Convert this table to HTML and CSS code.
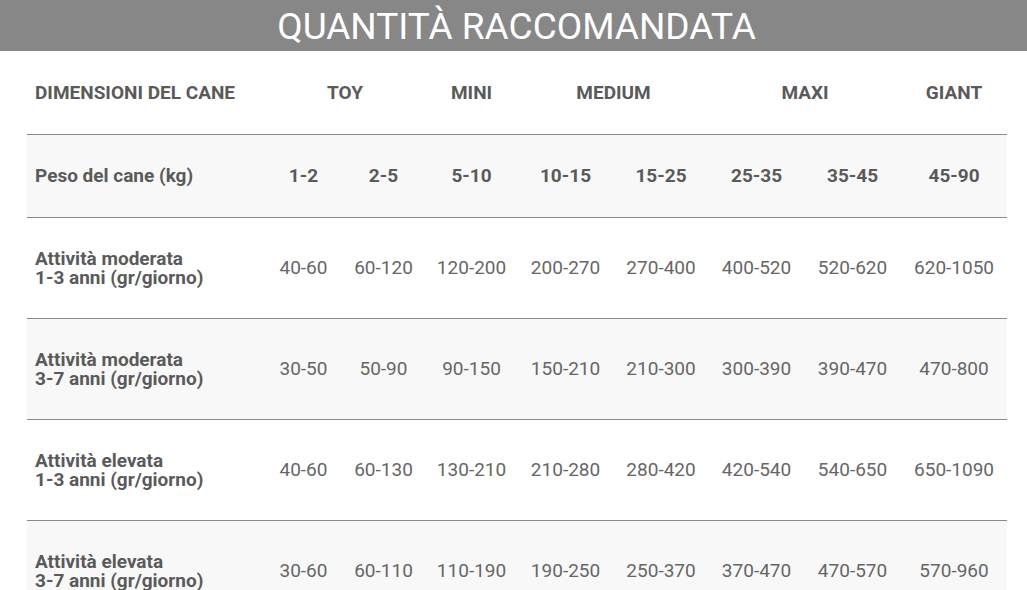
FILE: index.html
```html
<!DOCTYPE html>
<html lang="it">
<head>
<meta charset="utf-8">
<title>Quantità raccomandata</title>
<link rel="stylesheet" href="styles.css">
</head>
<body>
<header class="band">
  <h1 class="title">QUANTITÀ RACCOMANDATA</h1>
</header>
<table class="qty">
  <colgroup>
    <col class="c0"><col class="c1"><col class="c2"><col class="c3"><col class="c4"><col class="c5"><col class="c6"><col class="c7"><col class="c8">
  </colgroup>
  <tr class="head">
    <th class="label">DIMENSIONI DEL CANE</th>
    <th colspan="2">TOY</th>
    <th>MINI</th>
    <th colspan="2">MEDIUM</th>
    <th colspan="2">MAXI</th>
    <th>GIANT</th>
  </tr>
  <tr class="weight alt">
    <th class="label">Peso del cane (kg)</th>
    <td>1-2</td><td>2-5</td><td>5-10</td><td>10-15</td><td>15-25</td><td>25-35</td><td>35-45</td><td>45-90</td>
  </tr>
  <tr class="data">
    <th class="label">Attività moderata<br>1-3 anni (gr/giorno)</th>
    <td>40-60</td><td>60-120</td><td>120-200</td><td>200-270</td><td>270-400</td><td>400-520</td><td>520-620</td><td>620-1050</td>
  </tr>
  <tr class="data alt">
    <th class="label">Attività moderata<br>3-7 anni (gr/giorno)</th>
    <td>30-50</td><td>50-90</td><td>90-150</td><td>150-210</td><td>210-300</td><td>300-390</td><td>390-470</td><td>470-800</td>
  </tr>
  <tr class="data">
    <th class="label">Attività elevata<br>1-3 anni (gr/giorno)</th>
    <td>40-60</td><td>60-130</td><td>130-210</td><td>210-280</td><td>280-420</td><td>420-540</td><td>540-650</td><td>650-1090</td>
  </tr>
  <tr class="data alt">
    <th class="label">Attività elevata<br>3-7 anni (gr/giorno)</th>
    <td>30-60</td><td>60-110</td><td>110-190</td><td>190-250</td><td>250-370</td><td>370-470</td><td>470-570</td><td>570-960</td>
  </tr>
</table>
</body>
</html>
```
FILE: styles.css
```css
html, body {
  margin: 0;
  padding: 0;
  background: #ffffff;
  font-family: Roboto, "Liberation Sans", Arial, sans-serif;
}

.band {
  background: #878787;
  height: 51px;
  display: flex;
  justify-content: center;
  align-items: flex-start;
  overflow: hidden;
  padding-left: 6px;
}

.title {
  margin: 0;
  font-weight: 400;
  font-size: 37px;
  line-height: 53px;
  color: #ffffff;
}

.qty {
  margin-left: 27px;
  width: 980px;
  border-collapse: collapse;
  table-layout: fixed;
  color: #666666;
}

.c0 { width: 238px; }
.c1 { width: 77px; }
.c2 { width: 83px; }
.c3 { width: 93px; }
.c4 { width: 95px; }
.c5 { width: 96px; }
.c6 { width: 95px; }
.c7 { width: 97px; }
.c8 { width: 106px; }

.qty th,
.qty td {
  padding: 0;
  text-align: center;
  vertical-align: middle;
  border-bottom: 1px solid #8a8a8a;
  white-space: nowrap;
}

.qty th {
  font-weight: 700;
  font-size: 19px;
  color: #5a5a5a;
}

.qty td {
  font-weight: 400;
  font-size: 19px;
}

.qty .label {
  text-align: left;
  padding-left: 8px;
  line-height: 19px;
}

.head { height: 83px; }
.head th { padding-top: 1px; }

.weight { height: 83px; }
.weight td {
  font-weight: 700;
  font-size: 19px;
  color: #5a5a5a;
}

.data { height: 101px; }

.alt { background: #f8f8f8; }
```
